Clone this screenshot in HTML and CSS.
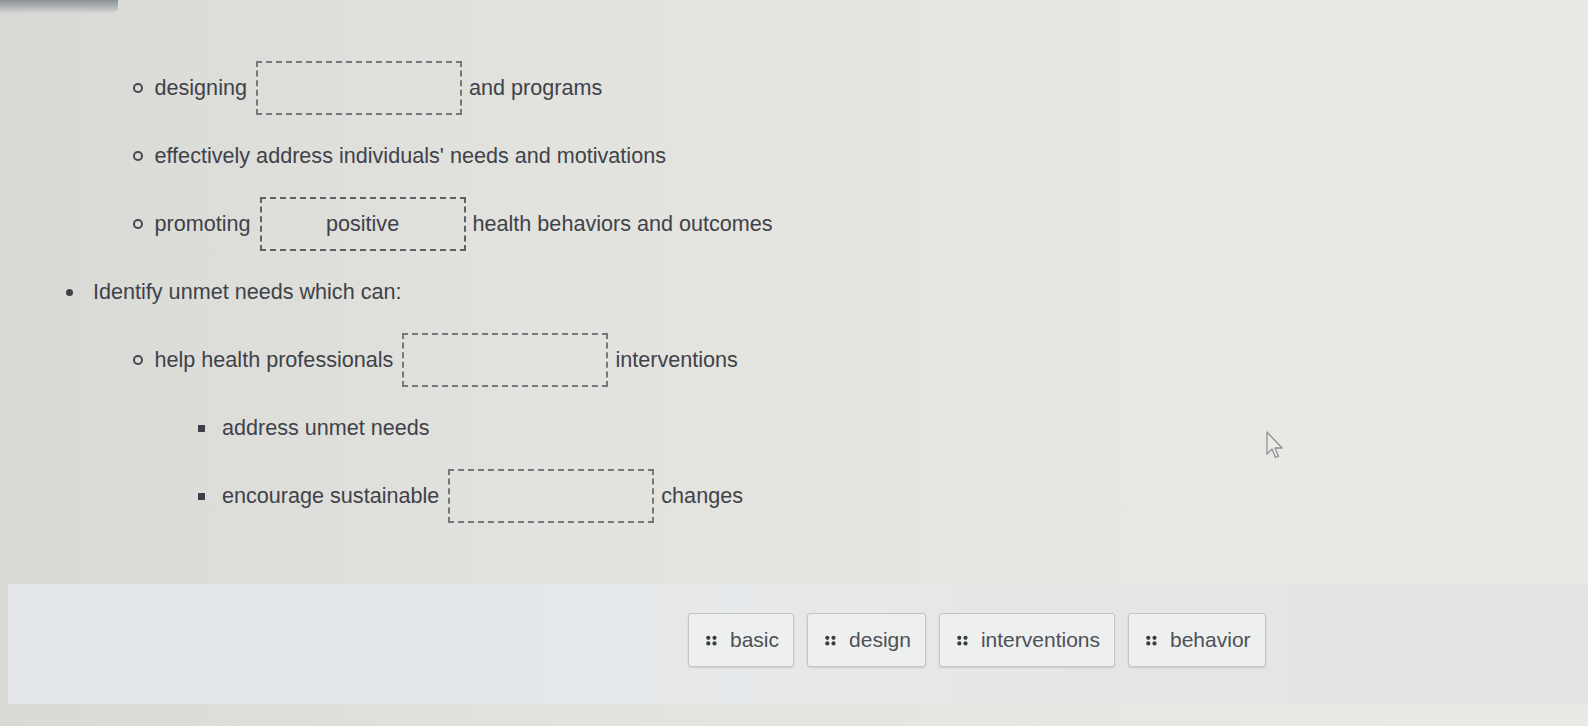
FILE: index.html
```html
<!DOCTYPE html>
<html lang="en">
<head>
<meta charset="utf-8">
<title>Cloze exercise</title>
<link rel="stylesheet" href="styles.css">
</head>
<body>
<div class="page">
  <div class="topedge"></div>
  <div class="content">
    <ul class="list l1">
      <li class="cont">
        <ul class="list l2">
          <li><div class="row"><span>designing</span><span class="blank"></span><span>and programs</span></div></li>
          <li><div class="row"><span>effectively address individuals' needs and motivations</span></div></li>
          <li><div class="row"><span>promoting</span><span class="blank filled">positive</span><span>health behaviors and outcomes</span></div></li>
        </ul>
      </li>
      <li>
        <div class="row"><span>Identify unmet needs which can:</span></div>
        <ul class="list l2 nested">
          <li>
            <div class="row"><span>help health professionals</span><span class="blank"></span><span>interventions</span></div>
            <ul class="list l3">
              <li><div class="row"><span>address unmet needs</span></div></li>
              <li><div class="row"><span>encourage sustainable</span><span class="blank"></span><span>changes</span></div></li>
            </ul>
          </li>
        </ul>
      </li>
    </ul>
  </div>
  <div class="bank">
    <div class="chip"><svg class="grip" width="11" height="11" viewBox="0 0 11 11"><circle cx="2.3" cy="2.8" r="2.1"/><circle cx="8.5" cy="2.8" r="2.1"/><circle cx="2.3" cy="8.4" r="2.1"/><circle cx="8.5" cy="8.4" r="2.1"/></svg><span>basic</span></div>
    <div class="chip"><svg class="grip" width="11" height="11" viewBox="0 0 11 11"><circle cx="2.3" cy="2.8" r="2.1"/><circle cx="8.5" cy="2.8" r="2.1"/><circle cx="2.3" cy="8.4" r="2.1"/><circle cx="8.5" cy="8.4" r="2.1"/></svg><span>design</span></div>
    <div class="chip"><svg class="grip" width="11" height="11" viewBox="0 0 11 11"><circle cx="2.3" cy="2.8" r="2.1"/><circle cx="8.5" cy="2.8" r="2.1"/><circle cx="2.3" cy="8.4" r="2.1"/><circle cx="8.5" cy="8.4" r="2.1"/></svg><span>interventions</span></div>
    <div class="chip"><svg class="grip" width="11" height="11" viewBox="0 0 11 11"><circle cx="2.3" cy="2.8" r="2.1"/><circle cx="8.5" cy="2.8" r="2.1"/><circle cx="2.3" cy="8.4" r="2.1"/><circle cx="8.5" cy="8.4" r="2.1"/></svg><span>behavior</span></div>
  </div>
  <svg class="cursor" width="20" height="30" viewBox="0 0 20 30"><path d="M2 2 L2 24 L7 19 L10.5 27.5 L13.5 26.3 L10 18 L17 18 Z" fill="#ebeae6" stroke="#8f9296" stroke-width="1.3" stroke-linejoin="round"/></svg>
</div>
</body>
</html>
```

FILE: styles.css
```css
html, body {
  margin: 0;
  padding: 0;
}

body {
  width: 1588px;
  height: 726px;
  overflow: hidden;
  font-family: "Liberation Sans", Arial, sans-serif;
  color: #3f4248;
  background: linear-gradient(90deg, #d9dad6 0%, #e2e2de 35%, #e8e7e2 70%, #ebe9e4 100%);
}

.page {
  position: relative;
  height: 726px;
}

.topedge {
  width: 118px;
  height: 14px;
  background: linear-gradient(180deg, #8a9297 0%, #b9bdbd 60%, rgba(220,220,216,0) 100%);
  border-bottom-right-radius: 14px 6px;
}

.content {
  padding-top: 40px;
  height: 516px;
  box-sizing: border-box;
}

.list {
  list-style: none;
  margin: 0;
  padding: 0;
}

.l1 {
  padding-left: 66px;
}

.l1 > li.cont {
  margin-left: -66px;
}

.l1 > li.cont > .l2 {
  padding-left: 133px;
}

.l2.nested {
  padding-left: 67px;
}

.l3 {
  padding-left: 65px;
}

.row {
  display: flex;
  align-items: center;
  height: 68px;
  font-size: 21.6px;
  white-space: nowrap;
}

.l1 > li > .row::before {
  content: "";
  width: 7px;
  height: 7px;
  border-radius: 50%;
  background: #3d4046;
  margin-right: 20px;
  flex: none;
}

.l2 > li > .row::before {
  content: "";
  width: 5.5px;
  height: 5.5px;
  border-radius: 50%;
  border: 2px solid #474a50;
  margin-right: 12px;
  flex: none;
}

.l3 > li > .row::before {
  content: "";
  width: 7px;
  height: 7px;
  background: #3d4046;
  margin-right: 17px;
  flex: none;
}

.blank {
  display: flex;
  align-items: center;
  justify-content: center;
  width: 206px;
  height: 54px;
  box-sizing: border-box;
  border: 2px dashed #75787d;
  margin: 0 7px 0 9px;
  color: #3f4248;
}

.blank.filled {
  border-color: #5d6065;
}

.bank {
  display: flex;
  align-items: flex-start;
  gap: 13px;
  height: 120px;
  box-sizing: border-box;
  padding: 29px 0 0 680px;
  margin: 54px 0 0 8px;
  background: linear-gradient(90deg, #e3e6e8 0%, #e6e8ea 50%, #e1e3e4 100%);
}

.chip {
  display: flex;
  align-items: center;
  gap: 13px;
  height: 54px;
  box-sizing: border-box;
  padding: 0 14px 0 17px;
  background: #eeefef;
  border: 1px solid #c3c5c7;
  border-radius: 3px;
  box-shadow: 0 1px 2px rgba(0, 0, 0, 0.12);
  font-size: 21px;
  color: #4d5057;
}

.grip {
  fill: #3a3d43;
  flex: none;
}

.cursor {
  position: absolute;
  left: 1265px;
  top: 430px;
}
```
